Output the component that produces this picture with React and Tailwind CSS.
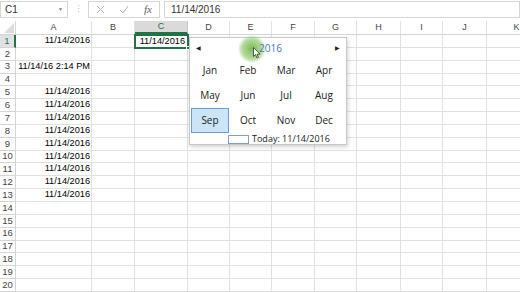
import React from 'react'

const cols = [
  { id: 'A', w: 'w-[76px]' },
  { id: 'B', w: 'w-[43px]' },
  { id: 'C', w: 'w-[53px]' },
  { id: 'D', w: 'w-[42px]' },
  { id: 'E', w: 'w-[42px]' },
  { id: 'F', w: 'w-[43px]' },
  { id: 'G', w: 'w-[42px]' },
  { id: 'H', w: 'w-[44px]' },
  { id: 'I', w: 'w-[42px]' },
  { id: 'J', w: 'w-[44px]' },
  { id: 'K', w: 'w-[60px]' },
]

const colA = {
  1: '11/14/2016',
  3: '11/14/16 2:14 PM',
  5: '11/14/2016', 6: '11/14/2016', 7: '11/14/2016', 8: '11/14/2016', 9: '11/14/2016',
  10: '11/14/2016', 11: '11/14/2016', 12: '11/14/2016', 13: '11/14/2016',
}

const months = ['Jan', 'Feb', 'Mar', 'Apr', 'May', 'Jun', 'Jul', 'Aug', 'Sep', 'Oct', 'Nov', 'Dec']

const rows = Array.from({ length: 20 }, (_, i) => i + 1)

const FormulaBar = () => (
  <div className="flex items-center h-[21px] pt-[1px] pb-[3px] text-[10px] text-[#333]">
    {/* Name box */}
    <div className="flex items-center justify-between w-[68px] h-full border border-[#d6d6d6] px-[4px]">
      <span>C1</span>
      <span className="text-[5px] text-[#777]">▼</span>
    </div>
    <div className="w-[20px] flex justify-center text-[#bbb] text-[9px]">⋮</div>
    {/* cancel / enter / fx */}
    <div className="flex items-center w-[72px] h-full border border-[#d6d6d6]">
      <svg className="ml-[7px]" width="9" height="9" viewBox="0 0 9 9">
        <path d="M1 1 L8 8 M8 1 L1 8" stroke="#b5b5b5" strokeWidth="1" />
      </svg>
      <svg className="ml-[14px]" width="10" height="9" viewBox="0 0 10 9">
        <path d="M1 5 L4 8 L9 1" stroke="#b5b5b5" strokeWidth="1" fill="none" />
      </svg>
      <span className="ml-[15px] italic text-[11px] text-[#666] font-['Liberation_Serif',serif]">fx</span>
    </div>
    <div className="flex-1 h-full border border-[#d6d6d6] ml-[4px] pl-[6px] flex items-center">
      11/14/2016
    </div>
  </div>
)

const DatePopup = () => (
  <div className="absolute left-[189px] top-[16px] w-[158px] h-[108px] bg-white border border-[#c8c8c8] shadow-[1px_2px_4px_rgba(0,0,0,0.18)] font-['Open_Sans',sans-serif] text-[#222]">
    {/* header */}
    <div className="relative flex items-center justify-between h-[20px] px-[6px]">
      <span className="text-[6px] text-[#222]">◀</span>
      <span className="text-[6px] text-[#222]">▶</span>
      {/* click highlight */}
      <div className="absolute left-[48px] top-[-3px] w-[28px] h-[28px] rounded-full bg-[radial-gradient(circle,rgba(100,175,60,0.85)_0%,rgba(130,195,90,0.6)_50%,rgba(160,210,120,0)_72%)]" />
      <span className="absolute left-[69px] top-[3px] text-[10px] text-[#4a78b8]">2016</span>
      <svg className="absolute left-[63px] top-[9px]" width="8" height="12" viewBox="0 0 8 12">
        <path d="M0.5 0.5 L0.5 9.5 L2.6 7.6 L4 11 L5.4 10.4 L4 7.1 L7 7.1 Z" fill="#fff" stroke="#333" strokeWidth="0.8" />
      </svg>
    </div>
    {/* months */}
    <div className="grid grid-cols-[repeat(4,38px)] grid-rows-[repeat(3,25px)] pl-[1px]">
      {months.map(m => (
        <div
          key={m}
          className={
            m === 'Sep'
              ? 'flex items-center justify-center text-[10px] bg-[#cce4f7] border border-[#6e9ccf]'
              : 'flex items-center justify-center text-[10px]'
          }
        >
          {m}
        </div>
      ))}
    </div>
    {/* today */}
    <div className="flex items-center h-[12px] pl-[38px] text-[9px]">
      <div className="w-[21px] h-[9px] border border-[#7d9ec9] mr-[3px]" />
      <span>Today: 11/14/2016</span>
    </div>
  </div>
)

const App = () => {
  return (
    <div className="w-[520px] h-[292px] overflow-hidden bg-white font-['Liberation_Sans',Arial,sans-serif]">
      <FormulaBar />
      <div className="relative">
        {/* column headers */}
        <div className="flex h-[14px] border-b border-[#d4d4d4] text-[9px] text-[#444]">
          <div className="w-[16px] shrink-0 border-r border-[#d4d4d4] flex items-end justify-end pr-[1px] pb-[1px]">
            <div className="w-0 h-0 border-l-[10px] border-l-transparent border-b-[10px] border-b-[#dcdcdc]" />
          </div>
          {cols.map(c => (
            <div
              key={c.id}
              className={
                c.id === 'C'
                  ? `${c.w} shrink-0 flex items-center justify-center bg-[#dadada] border-r border-[#c6c6c6] border-b-2 border-b-[#217346] text-[#217346]`
                  : `${c.w} shrink-0 flex items-center justify-center border-r border-[#e2e2e2]`
              }
            >
              {c.id}
            </div>
          ))}
        </div>
        {/* rows */}
        {rows.map(r => (
          <div key={r} className="flex h-[12.85px]">
            <div
              className={
                r === 1
                  ? 'w-[16px] shrink-0 flex items-center justify-center text-[9.5px] bg-[#e1e1e1] text-[#217346] border-r-2 border-r-[#217346] border-b border-[#d4d4d4]'
                  : 'w-[16px] shrink-0 flex items-center justify-center text-[9.5px] text-[#444] border-r border-b border-[#d4d4d4]'
              }
            >
              {r}
            </div>
            {cols.map(c => (
              <div
                key={c.id}
                className={`${c.w} shrink-0 border-r border-b border-[#e1e1e1] flex items-center justify-end pr-[1px] text-[9.2px] text-black whitespace-nowrap`}
              >
                {c.id === 'A' ? colA[r] : null}
              </div>
            ))}
          </div>
        ))}
        {/* active cell C1 */}
        <div className="absolute left-[134px] top-[13px] w-[55px] h-[15px] border-2 border-[#217346] flex items-center justify-end pr-[2px] text-[9.2px] text-black">
          11/14/2016
          <div className="absolute right-[-3px] bottom-[-3px] w-[4px] h-[4px] bg-[#217346] border border-white" />
        </div>
        <DatePopup />
      </div>
    </div>
  )
}

export default App
